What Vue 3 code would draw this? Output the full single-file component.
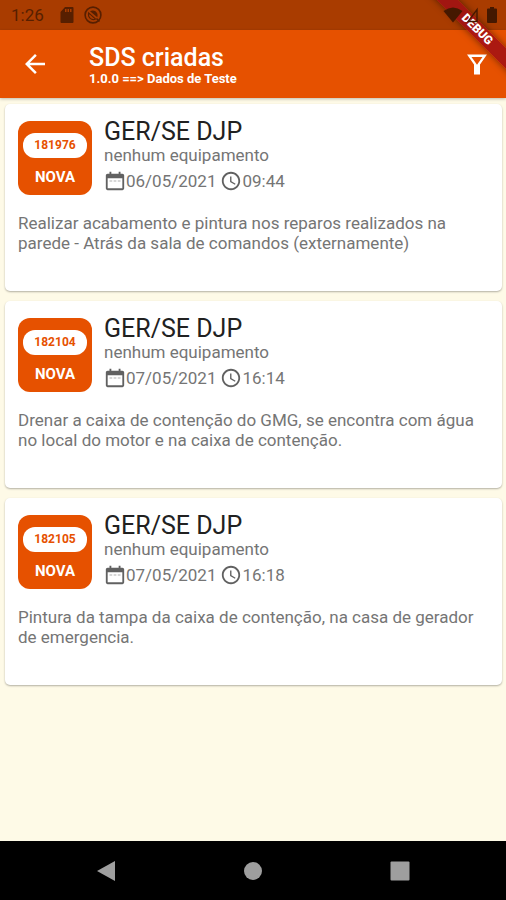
<script setup>
const orders = [
  {
    id: '181976', status: 'NOVA', place: 'GER/SE DJP', equipment: 'nenhum equipamento',
    date: '06/05/2021', time: '09:44',
    text: 'Realizar acabamento e pintura nos reparos realizados na parede - Atrás da sala de comandos (externamente)',
  },
  {
    id: '182104', status: 'NOVA', place: 'GER/SE DJP', equipment: 'nenhum equipamento',
    date: '07/05/2021', time: '16:14',
    text: 'Drenar a caixa de contenção do GMG, se encontra com água no local do motor e na caixa de contenção.',
  },
  {
    id: '182105', status: 'NOVA', place: 'GER/SE DJP', equipment: 'nenhum equipamento',
    date: '07/05/2021', time: '16:18',
    text: 'Pintura da tampa da caixa de contenção, na casa de gerador de emergencia.',
  },
]
</script>

<template>
  <div class="screen">
    <div class="status-bar">
      <span class="clock">1:26</span>
      <svg class="status-icon sd" viewBox="0 0 14 18"><path d="M5 1h7.500q1 0 1 1v14q0 1-1 1h-11q-1 0-1-1V6zM5 3v3h1.500V3zM7.500 3v3H9V3zM10 3v3h1.500V3z" fill-rule="evenodd" /></svg>
      <svg class="status-icon" viewBox="0 0 18 18">
        <circle cx="9" cy="9" r="7.900" fill="none" stroke="currentColor" stroke-width="1.600" />
        <path d="M6 5.200Q9 3.600 11.800 5.500 14.300 7.600 13.300 11.200z" />
        <path d="M4.600 6.800L11.600 13Q8.600 14.400 6.200 12.400 3.900 10.200 4.600 6.800z" fill="none" stroke="currentColor" stroke-width="1.100" />
        <path d="M12.500 12.500l3 3" fill="none" stroke="currentColor" stroke-width="1.500" />
      </svg>
      <span class="spacer"></span>
      <svg class="status-icon wifi" viewBox="0 0 20 16"><path d="M10 15.500L.5 4Q10-3 19.500 4z" /></svg>
      <svg class="status-icon signal" viewBox="0 0 16 16"><path d="M14 2.500v12H5z" fill="none" stroke="currentColor" stroke-width="1.400" /></svg>
      <svg class="status-icon battery" viewBox="0 0 10 16"><path d="M3 0h4v1.500h2q1 0 1 1V15q0 1-1 1H1q-1 0-1-1V2.500q0-1 1-1h2z" /></svg>
    </div>

    <header class="app-bar">
      <button class="icon-button" type="button" aria-label="Voltar">
        <svg viewBox="0 0 24 24"><path d="M20 11H7.830l5.590-5.590L12 4l-8 8 8 8 1.410-1.410L7.830 13H20z" /></svg>
      </button>
      <div class="heading">
        <h1>SDS criadas</h1>
        <p>1.0.0 ==&gt; Dados de Teste</p>
      </div>
      <button class="icon-button" type="button" aria-label="Filtrar">
        <svg viewBox="0 0 30 30"><path d="M5 5.500H25L18 15.500V25.500H12V15.500zM9.500 8L15 15.800 20.500 8z" fill-rule="evenodd" /></svg>
      </button>
    </header>

    <main class="list">
      <article v-for="order in orders" :key="order.id" class="card">
        <div class="summary">
          <div class="badge">
            <span class="number">{{ order.id }}</span>
            <span class="state">{{ order.status }}</span>
          </div>
          <div class="details">
            <h2>{{ order.place }}</h2>
            <p class="equipment">{{ order.equipment }}</p>
            <div class="when">
              <svg viewBox="0 0 24 24"><path d="M20 4h-2V2h-2v2H8V2H6v2H4c-1.100 0-2 .9-2 2v14c0 1.100.9 2 2 2h16c1.100 0 2-.9 2-2V6c0-1.100-.9-2-2-2zm0 16H4V9h16v11z" /><path d="M6 11h3v2H6zm4.500 0h3v2h-3zm4.500 0h3v2h-3z" opacity=".25" /></svg>
              <time>{{ order.date }}</time>
              <svg class="watch" viewBox="0 0 24 24"><path d="M11.990 2C6.470 2 2 6.480 2 12s4.470 10 9.990 10C17.520 22 22 17.520 22 12S17.520 2 11.990 2zM12 20c-4.420 0-8-3.580-8-8s3.580-8 8-8 8 3.580 8 8-3.580 8-8 8zm.5-13H11v6l5.250 3.150.75-1.230-4.500-2.670z" /></svg>
              <time>{{ order.time }}</time>
            </div>
          </div>
        </div>
        <p class="description">{{ order.text }}</p>
      </article>
    </main>

    <nav class="nav-bar">
      <button type="button" aria-label="Voltar"><svg viewBox="0 0 20 22"><path d="M1 11L19 1v20z" /></svg></button>
      <button type="button" aria-label="Início"><svg viewBox="0 0 20 22"><circle cx="10" cy="11" r="9" /></svg></button>
      <button type="button" aria-label="Recentes"><svg viewBox="0 0 20 22"><rect x="0.500" y="1.500" width="19" height="19" rx="1" /></svg></button>
    </nav>

    <div class="ribbon-corner"><span class="ribbon">DEBUG</span></div>
  </div>
</template>

<style>
body {
  margin: 0;
}
</style>

<style scoped>
.screen {
  position: relative;
  display: flex;
  flex-direction: column;
  min-height: 100vh;
  background: #fefae7;
  font-family: Roboto, "Liberation Sans", sans-serif;
}
h1, h2, p {
  margin: 0;
  font-weight: 400;
}
button {
  display: flex;
  align-items: center;
  justify-content: center;
  padding: 0;
  border: 0;
  background: none;
  color: inherit;
}
svg {
  display: block;
  fill: currentColor;
}
.status-bar {
  display: flex;
  align-items: center;
  height: 30px;
  padding: 0 9px 0 11px;
  background: #a93c00;
  color: #571f00;
}
.clock {
  margin-right: 16px;
  font-size: 17px;
}
.status-icon {
  position: relative;
  z-index: 2;
  width: 18px;
  height: 18px;
}
.sd {
  width: 14px;
  margin-right: 10px;
}
.spacer {
  flex: 1;
}
.wifi, .signal, .battery {
  height: 16px;
  color: #451800;
}
.wifi {
  width: 20px;
}
.signal {
  width: 16px;
  margin-right: 8px;
}
.battery {
  width: 10px;
}
.app-bar {
  display: flex;
  align-items: center;
  height: 68px;
  padding: 0 14px 0 20px;
  background: #e65100;
  color: #fff;
  box-shadow: 0 1px 3px rgba(0, 0, 0, 0.25);
}
.icon-button {
  width: 30px;
  height: 30px;
}
.icon-button svg {
  width: 30px;
  height: 30px;
}
.heading {
  flex: 1;
  padding: 2px 0 0 39px;
}
h1 {
  font-size: 25px;
  font-weight: 500;
  line-height: 28px;
}
.heading p {
  font-size: 13px;
  font-weight: 700;
  line-height: 14px;
}
.list {
  flex: 1;
  display: flex;
  flex-direction: column;
  gap: 10px;
  padding: 6px 4px 6px 5px;
}
.card {
  box-sizing: border-box;
  min-height: 187px;
  padding: 13px 13px 12px;
  border-radius: 5px;
  background: #fff;
  box-shadow: 0 1px 2px rgba(0, 0, 0, 0.3);
}
.summary {
  display: flex;
  gap: 12px;
}
.badge {
  display: flex;
  flex-direction: column;
  box-sizing: border-box;
  width: 74px;
  height: 74px;
  margin-top: 4px;
  padding: 12px 5px;
  border-radius: 12px;
  background: #e65100;
  text-align: center;
  font-weight: 700;
}
.number {
  border-radius: 12px;
  background: #fff;
  color: #e65100;
  font-size: 12px;
  line-height: 25px;
}
.state {
  margin-top: 9px;
  color: #fff;
  font-size: 15px;
  line-height: 20px;
}
h2 {
  color: #212121;
  font-size: 25px;
  line-height: 30px;
}
.equipment, .when, .description {
  color: #757575;
  font-size: 17px;
  line-height: 20px;
}
.equipment {
  line-height: 16px;
}
.when {
  display: flex;
  align-items: center;
  height: 22px;
  margin-top: 7px;
}
.when svg {
  width: 22px;
  height: 22px;
  color: #616161;
}
.when .watch {
  margin-left: 4px;
}
.description {
  margin-top: 18px;
}
.nav-bar {
  display: flex;
  height: 59px;
  padding: 0 33px;
  background: #000;
  color: #9e9e9e;
}
.nav-bar button {
  flex: 1;
}
.nav-bar svg {
  width: 20px;
  height: 22px;
}
.ribbon-corner {
  position: absolute;
  top: 0;
  right: 0;
  width: 90px;
  height: 90px;
  overflow: hidden;
  pointer-events: none;
}
.ribbon {
  position: absolute;
  top: 22px;
  right: -41px;
  width: 140px;
  background: rgba(160, 15, 20, 0.85);
  box-shadow: 0 0 7px rgba(0, 0, 0, 0.5);
  color: #fff;
  font-size: 12px;
  font-weight: 900;
  line-height: 15px;
  text-align: center;
  transform: rotate(45deg);
}
</style>
